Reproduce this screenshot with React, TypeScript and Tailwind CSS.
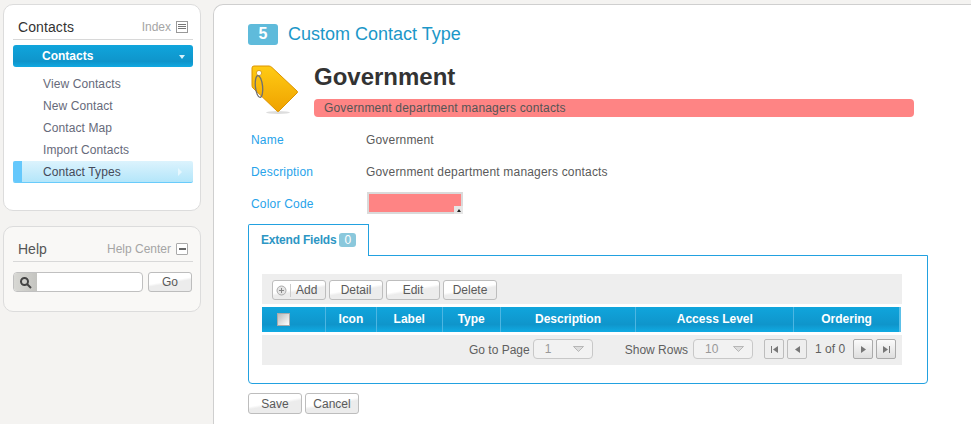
const btn = "flex items-center justify-center h-[21px] rounded-[3px] border border-[#bdbdbd] bg-[linear-gradient(170deg,#ffffff_45%,#ececec_55%)] text-[12px] text-[#5a5a5a]";
const columns = [
  { label: "Icon", width: "w-[51px]" },
  { label: "Label", width: "w-[66px]" },
  { label: "Type", width: "w-[58px]" },
  { label: "Description", width: "w-[136px]" },
  { label: "Access Level", width: "w-[158px]" },
  { label: "Ordering", width: "w-[106px]" },
];
const menu = ["View Contacts", "New Contact", "Contact Map", "Import Contacts"];

function TagIcon() {
  return (
    <svg width="52" height="50" viewBox="0 0 52 50">
      <defs>
        <linearGradient id="tag" x1="0" y1="0" x2="0" y2="1">
          <stop offset="0" stopColor="#ffcb14" />
          <stop offset="1" stopColor="#efa200" />
        </linearGradient>
      </defs>
      <ellipse cx="30" cy="47.5" rx="12" ry="1.5" fill="#ddd" />
      <path d="M6 1 L21 1 Q22.5 1 24 2.5 L49 26 Q50 27 49 28 L31 46 Q30 47 29 46 L5 23 Q4 22 4 20.5 L4 3 Q4 1 6 1 Z" fill="url(#tag)" stroke="#dc9400" strokeWidth="1" />
      <circle cx="11" cy="8" r="2.6" fill="#fff" stroke="#c98500" strokeWidth="0.7" />
      <ellipse cx="11" cy="21.5" rx="3.6" ry="11" transform="rotate(-6 11 21.5)" fill="none" stroke="#6f6f6f" strokeWidth="1.3" />
    </svg>
  );
}

function PageBtn({ dir, active }: { dir: "first" | "prev" | "next" | "last"; active?: boolean }) {
  const left = dir === "first" || dir === "prev";
  const bar = dir === "first" || dir === "last";
  return (
    <div className={`w-[20px] h-[20px] rounded-[2px] border flex items-center justify-center gap-px ${active ? "bg-[linear-gradient(#fafafa,#dedede)] border-[#aaa]" : "bg-[#eee] border-[#bdbdbd]"} ${left ? "" : "flex-row-reverse"}`}>
      {bar && <span className="w-px h-[7px] bg-[#777]" />}
      <svg width="5" height="7" viewBox="0 0 5 7"><path d={left ? "M5 0 L0 3.5 L5 7 Z" : "M0 0 L5 3.5 L0 7 Z"} fill="#777" /></svg>
    </div>
  );
}

function Select({ value, width }: { value: string; width: string }) {
  return (
    <div className={`${width} h-[20px] mb-[2px] rounded-[4px] border border-[#c8c8c8] bg-[#f2f2f2] flex items-center justify-between pl-[11px] pr-[8px] text-[12px] text-[#999]`}>
      <span>{value}</span>
      <svg width="11" height="6" viewBox="0 0 11 6"><path d="M0.5 0.5 H10.5 L5.5 5.5 Z" fill="#ddd" stroke="#aaa" strokeWidth="0.8" /></svg>
    </div>
  );
}

export default function App() {
  return (
    <div className="h-[424px] w-[971px] overflow-hidden bg-[#f4f3f1] flex items-stretch font-['Liberation_Sans',Arial,sans-serif] text-[12px]">
      <div className="w-[198px] ml-[3px] mt-[4px] shrink-0 flex flex-col gap-[15px]">
        <div className="h-[207px] rounded-[10px] border border-[#dcdcdc] bg-white pl-[9px] pr-[7px] pt-[8px]">
          <div className="h-[27px] border-b border-[#d8d8d8] flex items-center justify-between pl-[5px] pr-[5px] pt-px">
            <span className="text-[14px] text-[#333] tracking-[0.1px] mt-[2px]">Contacts</span>
            <div className="flex items-center gap-[5px] text-[#a5a5a5]">
              <span>Index</span>
              <span className="w-[12px] h-[12px] border border-[#999] flex flex-col justify-center gap-px px-px">
                <i className="h-px bg-[#777]" /><i className="h-px bg-[#777]" /><i className="h-px bg-[#777]" />
              </span>
            </div>
          </div>
          <div className="mt-[5px] h-[22px] rounded-[3px] bg-[linear-gradient(#10a5dc,#0f95cb_75%,#10a9e2)] flex items-center justify-between pl-[29px] pr-[8px] text-white font-bold">
            <span>Contacts</span>
            <span className="border-x-[3.5px] border-x-transparent border-t-[4px] border-t-[#d9f1fb] mt-px" />
          </div>
          <div className="mt-[6px] flex flex-col">
            {menu.map((m) => (
              <div key={m} className="h-[22px] leading-[22px] pl-[30px] text-[#666a7a] tracking-[0.1px]">{m}</div>
            ))}
            <div className="h-[22px] rounded-[2px] border-b border-[#68cbfb] bg-[linear-gradient(#dcf3fd,#b4e6fa)] flex items-center justify-between text-[#444a5a]">
              <div className="flex items-center h-full">
                <span className="w-[9px] h-full bg-[#65c8fc] rounded-l-[2px]" />
                <span className="pl-[21px] tracking-[0.1px]">Contact Types</span>
              </div>
              <span className="mr-[11px] border-y-[4px] border-y-transparent border-l-[4px] border-l-[#e6f7fe]" />
            </div>
          </div>
        </div>
        <div className="h-[86px] rounded-[10px] border border-[#dcdcdc] bg-[#f9f8f6] pl-[9px] pr-[7px] pt-[8px]">
          <div className="h-[27px] border-b border-[#d8d8d8] flex items-center justify-between pl-[5px] pr-[5px] pt-[2px]">
            <span className="text-[14px] text-[#555]">Help</span>
            <div className="flex items-center gap-[5px] text-[#a5a5a5]">
              <span>Help Center</span>
              <span className="w-[12px] h-[12px] border border-[#aaa] rounded-[1px] flex items-center justify-center bg-white">
                <i className="w-[7px] h-[2px] bg-[#666]" />
              </span>
            </div>
          </div>
          <div className="mt-[10px] flex items-center justify-between pr-px">
            <div className="w-[130px] h-[20px] rounded-[4px] border border-[#c0c0c0] bg-white flex overflow-hidden">
              <div className="w-[23px] h-full bg-[linear-gradient(90deg,#d8d8d4,#c4c4c0)] flex items-center justify-center">
                <svg width="13" height="13" viewBox="0 0 13 13" fill="none" stroke="#444" strokeWidth="2"><circle cx="5.5" cy="5.5" r="3.5" /><path d="M8 8 L12 12" /></svg>
              </div>
            </div>
            <div className={`${btn} w-[44px] !h-[20px]`}>Go</div>
          </div>
        </div>
      </div>

      <div className="ml-[12px] mt-[4px] flex-1 rounded-tl-[10px] border-l border-t border-[#cfcfcf] bg-white pl-[34px] pt-[18px]">
        <div className="flex items-center h-[22px]">
          <span className="w-[30px] h-[21px] rounded-[3px] bg-[#5fbbdb] text-white text-[16px] font-bold flex items-center justify-center">5</span>
          <span className="ml-[10px] text-[18px] text-[#1c97c8]">Custom Contact Type</span>
        </div>

        <div className="mt-[20px] flex h-[52px]">
          <div className="w-[50px]"><TagIcon /></div>
          <div className="ml-[16px] w-[600px]">
            <div className="text-[24px] leading-[26px] font-bold text-[#333] -mt-[1px]">Government</div>
            <div className="mt-[9px] h-[18px] leading-[18px] rounded-[4px] bg-[#fe8484] pl-[10px] text-[#555] tracking-[0.18px]">Government department managers contacts</div>
          </div>
        </div>

        <div className="mt-[7px] flex flex-col">
          <div className="flex h-[32px] items-center pl-[3px]"><span className="w-[115px] text-[#27a3ea] tracking-[0.2px]">Name</span><span className="text-[#5a5a5a] tracking-[0.18px]">Government</span></div>
          <div className="flex h-[32px] items-center pl-[3px]"><span className="w-[115px] text-[#27a3ea] tracking-[0.2px]">Description</span><span className="text-[#5a5a5a] tracking-[0.18px]">Government department managers contacts</span></div>
          <div className="flex h-[32px] items-center pl-[3px]">
            <span className="w-[116px] text-[#27a3ea] tracking-[0.2px]">Color Code</span>
            <div className="relative w-[96px] h-[22px] mb-[2px] border-2 border-[#dadada] bg-[#fe8484]">
              <span className="absolute right-[-2px] bottom-[-2px] w-[9px] h-[8px] bg-[#e6e6e6] flex items-center justify-center">
                <i className="border-x-[2.5px] border-x-transparent border-b-[3px] border-b-[#222]" />
              </span>
            </div>
          </div>
        </div>

        <div className="mt-[4px] w-[680px]">
          <div className="relative z-10 w-[121px] h-[32px] border border-b-0 border-[#22a1e0] rounded-tl-[2px] bg-white flex items-center pl-[12px] pb-[2px] gap-[3px]">
            <span className="font-bold text-[#2d96c4] tracking-[-0.2px]">Extend Fields</span>
            <span className="w-[17px] h-[14px] rounded-[3px] bg-[#8ac8dc] text-white text-[12px] leading-[14px] text-center">0</span>
          </div>
          <div className="-mt-px h-[129px] border border-[#22a1e0] rounded-b-[4px] pt-[18px] pl-[13px]">
            <div className="w-[640px] h-[30px] bg-[#eee] flex items-center gap-[3px] pl-[10px] pt-[2px]">
              <div className={`${btn} w-[54px] !h-[20px] !justify-start pl-[3px]`}>
                <svg width="11" height="11" viewBox="0 0 11 11"><circle cx="5.5" cy="5.5" r="4.5" fill="#e5e5e5" stroke="#aaa" /><path d="M5.5 3 V8 M3 5.5 H8" stroke="#888" /></svg>
                <span className="ml-[3px] w-px h-[13px] bg-[#ccc]" />
                <span className="ml-[5px]">Add</span>
              </div>
              <div className={`${btn} w-[54px] !h-[20px]`}>Detail</div>
              <div className={`${btn} w-[54px] !h-[20px]`}>Edit</div>
              <div className={`${btn} w-[54px] !h-[20px]`}>Delete</div>
            </div>
            <div className="mt-[3px] w-[639px] h-[25px] flex bg-[linear-gradient(#10a5dc,#0f95cb_70%,#10abe3)] border-r-[2px] border-[#5cc0e8] text-white font-bold">
              <div className="w-[63px] flex items-center pl-[15px]">
                <span className="w-[13px] h-[13px] border border-[#aaa] bg-[linear-gradient(135deg,#bbb,#fff)]" />
              </div>
              {columns.map((c) => (
                <div key={c.label} className={`${c.width} border-l border-[#4db6e2] flex items-center justify-center pb-[2px]`}>{c.label}</div>
              ))}
            </div>
            <div className="mt-[3px] w-[640px] h-[30px] bg-[#eee] flex items-center text-[#5f5f5f]">
              <span className="ml-[207px]">Go to Page</span>
              <div className="ml-[3px] flex"><Select value="1" width="w-[60px]" /></div>
              <span className="ml-[32px]">Show Rows</span>
              <div className="ml-[5px] flex"><Select value="10" width="w-[60px]" /></div>
              <div className="ml-[11px] mb-[2px] flex items-center gap-[3px]">
                <PageBtn dir="first" /><PageBtn dir="prev" />
              </div>
              <span className="w-[46px] text-center mb-[2px]">1 of 0</span>
              <div className="mb-[2px] flex items-center gap-[3px]">
                <PageBtn dir="next" active /><PageBtn dir="last" active />
              </div>
            </div>
          </div>
        </div>

        <div className="mt-[9px] flex gap-[3px]">
          <div className={`${btn} w-[54px]`}>Save</div>
          <div className={`${btn} w-[54px]`}>Cancel</div>
        </div>
      </div>
    </div>
  );
}
